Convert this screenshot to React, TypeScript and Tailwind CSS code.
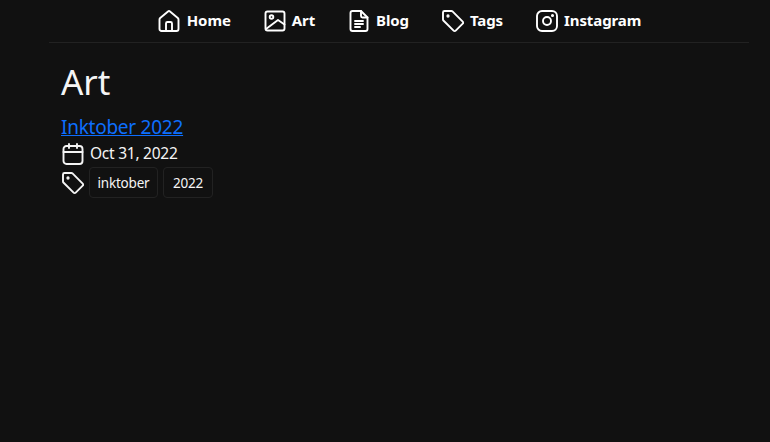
import type { ReactNode } from 'react';

const font = { fontFamily: '"Noto Sans", sans-serif' };

function Icon({ children }: { children: ReactNode }) {
  return (
    <svg viewBox="0 0 24 24" fill="none" stroke="currentColor" strokeWidth="1.9" strokeLinecap="round" strokeLinejoin="round" className="w-6 h-6 shrink-0">
      {children}
    </svg>
  );
}

const HomeIcon = () => (
  <Icon>
    <path d="M1.500 20V10.500c0-.6.300-1.100.700-1.500L10 2.500c.6-.5 1.400-.5 2 0L19.800 9c.4.400.7.900.7 1.500V20c0 1.100-.9 2-2 2h-15c-1.100 0-2-.9-2-2Z" />
    <path d="M8 22v-7.500c0-.8.700-1.500 1.500-1.500h3c.8 0 1.500.7 1.500 1.500V22" />
  </Icon>
);

const ImageIcon = () => (
  <Icon>
    <rect x="2.500" y="2.500" width="19" height="19" rx="2" />
    <path d="M3 20 15 11l6.500 4.500" />
    <circle cx="8.500" cy="8" r="1.800" />
  </Icon>
);

const FileIcon = () => (
  <Icon>
    <path d="M3.500 20v-16c0-1.100.9-2 2-2H14l6.500 6.500V20c0 1.100-.9 2-2 2h-13c-1.100 0-2-.9-2-2Z" />
    <path d="M14 2v5c0 .8.700 1.500 1.500 1.500h5" />
    <path d="M8 12h8M8 15h8M8 18h5" />
  </Icon>
);

const TagIcon = () => (
  <Icon>
    <path d="M2 3.500v7c0 .4.200.8.400 1l10.200 10.200c.6.600 1.500.6 2.100 0l7-7c.6-.6.600-1.500 0-2.100L11.500 2.400c-.3-.2-.6-.4-1-.4h-7C2.600 2 2 2.600 2 3.500Z" />
    <circle cx="7" cy="7" r=".7" fill="currentColor" />
  </Icon>
);

const InstagramIcon = () => (
  <Icon>
    <rect x="2" y="2" width="20" height="20" rx="5" />
    <circle cx="12" cy="12" r="4" />
    <circle cx="17.500" cy="6.500" r=".6" fill="currentColor" />
  </Icon>
);

const CalendarIcon = () => (
  <Icon>
    <rect x="2.500" y="4" width="19" height="18" rx="3" />
    <path d="M2.500 10h19M8 2v4M16 2v4" />
  </Icon>
);

const links = [
  { label: 'Home', icon: <HomeIcon /> },
  { label: 'Art', icon: <ImageIcon /> },
  { label: 'Blog', icon: <FileIcon /> },
  { label: 'Tags', icon: <TagIcon /> },
  { label: 'Instagram', icon: <InstagramIcon /> },
];

export default function App() {
  return (
    <div className="min-h-screen bg-[#111111] text-[#f5f5f5]" style={font}>
      <div className="w-[700px] ml-[49px]">
        <nav className="h-[43px] border-b border-[#222222] flex justify-center items-center gap-[32px] pl-[1px]">
          {links.map((l) => (
            <a key={l.label} className="flex items-center gap-[5px] text-[15px] tracking-[-0.1px] font-bold text-white">
              {l.icon}
              <span className="-mt-[2px]">{l.label}</span>
            </a>
          ))}
        </nav>
        <main className="px-3">
          <h1 className="text-[35px] leading-[44px] mt-[17px] text-[#f5f5f5]">Art</h1>
          <a className="block text-[19px] tracking-[-0.25px] leading-[26px] mt-[10px] text-[#0d6efd] underline">Inktober 2022</a>
          <div className="flex items-center gap-[5px] h-[26px] mt-[1px] text-[15.500px] tracking-[-0.25px]">
            <CalendarIcon />
            <span>Oct 31, 2022</span>
          </div>
          <div className="flex items-center gap-[4px]">
            <TagIcon />
            <span className="h-[31px] w-[69px] pt-[1px] flex items-center justify-center rounded border border-[#222222] text-[13.500px] tracking-[-0.2px]">inktober</span>
            <span className="h-[31px] w-[50px] ml-[1px] pt-[1px] flex items-center justify-center rounded border border-[#222222] text-[13.500px] tracking-[-0.2px]">2022</span>
          </div>
        </main>
      </div>
    </div>
  );
}
